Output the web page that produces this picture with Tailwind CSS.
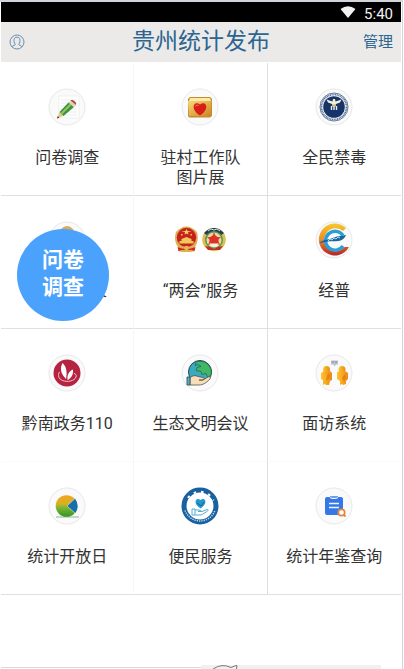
<!DOCTYPE html>
<html lang="zh-CN">
<head>
    <meta charset="UTF-8">
    <meta name="viewport" content="width=device-width, initial-scale=1">
    <title>贵州统计发布</title>
    <script src="https://cdn.jsdelivr.net/npm/@tailwindcss/browser@4"></script>
</head>
<body class="bg-white text-[#333333] font-[Roboto,'Noto_Sans_CJK_SC',sans-serif]">

<div class="relative flex flex-col min-h-screen border-t-2 border-t-gray-300 border-r border-r-gray-300 mr-px pl-px overflow-hidden">

    <!-- Status bar -->
    <div class="flex items-center justify-end gap-2 h-5 bg-black text-[#f2f2f2] text-[15px] pr-2 mr-px">
        <svg class="w-4 h-3" viewBox="0 0 16 12" fill="#f2f2f2" aria-hidden="true"><path d="M0.5 3Q8-2.5 15.5 3L8 12Z"/></svg>
        <span class="leading-5 mt-1">5:40</span>
    </div>

    <!-- Header -->
    <header class="grid grid-cols-3 items-center h-10 bg-[#ebeae9] text-[#2c6590] px-2 mr-px">
        <button type="button" aria-label="我的" class="justify-self-start">
            <svg class="size-4" viewBox="0 0 16 16" fill="none" stroke="#5c86a6" stroke-width="0.9">
                <circle cx="8" cy="8" r="7"/>
                <path d="M3 12.8c.5-1.600 3.400-1.400 3.400-2.500C5 9 4.800 7 5.100 5.200 5.500 2.500 10.500 2.500 10.900 5.200c.3 1.800.1 3.800-1.300 5.100 0 1.100 2.900.9 3.400 2.500"/>
            </svg>
        </button>
        <h1 class="justify-self-center whitespace-nowrap text-[23px] leading-10">贵州统计发布</h1>
        <button type="button" class="justify-self-end text-[15px]">管理</button>
    </header>

    <!-- Service grid -->
    <main class="grid grid-cols-3 auto-rows-[133px] pt-px mr-px text-base leading-5 text-center">

        <a href="#" class="flex flex-col items-center gap-[22px] pt-[25px] border-b border-b-[#e0e0e0] border-r border-r-[#f7f7f7]">
            <svg class="size-[38px]" viewBox="0 0 38 38" aria-hidden="true">
                <circle cx="19" cy="19" r="18" fill="#fafafa" stroke="#e8e8e8"/>
                <path d="M11 8h20v22H11z" fill="#fff" stroke="#e5e7e5" stroke-width=".6"/>
                <path d="M13 12h16M13 15h16M13 18h16M13 21h16M13 24h16M13 27h16" stroke="#e1e6e4" stroke-width=".7"/>
                <path d="M9 30.500l2.500-6.500 4 4z" fill="#e9c78a"/>
                <path d="M11.500 24L20.500 14.500l5.500 4.500-10.500 9z" fill="#3d9440"/>
                <path d="M12.700 25.100L21.900 15.700l1.600 1.300-9.500 9.500z" fill="#91c95a"/>
                <path d="M20.500 14.500l2-2 5.500 4.500-2 2z" fill="#e5cdb7"/>
                <path d="M22.500 12.500c2-1.500 6.500 1.500 5.500 4.500z" fill="#ad4b42"/>
                <path d="M9 30.500l.8-2.300 1.500 1.300z" fill="#222"/>
            </svg>
            <span>问卷调查</span>
        </a>

        <a href="#" class="flex flex-col items-center gap-[22px] pt-[25px] border-b border-b-[#e0e0e0] border-r border-r-[#dedede]">
            <svg class="size-[38px]" viewBox="0 0 38 38" aria-hidden="true">
                <defs><linearGradient id="folder" x2="1" y2="1"><stop stop-color="#f6da79"/><stop offset="1" stop-color="#cc8520"/></linearGradient></defs>
                <circle cx="19" cy="19" r="18" fill="#fafafa" stroke="#e8e8e8"/>
                <path d="M7 11l2-2h20l2 2v17l-2 1.500H8L7 28z" fill="#c78b2c"/>
                <path d="M7 13h23.500l-1 15H8z" fill="url(#folder)"/>
                <path d="M9 10h20l1 3H8z" fill="#fae9a8"/>
                <path d="M19 27.500C8.500 21 13 12 19 16.500 25 12 29.500 21 19 27.500z" fill="#d91e18"/>
                <path d="M14.500 18.500c.5-1.500 2-1.800 3-1" fill="none" stroke="#f6856b"/>
            </svg>
            <span>驻村工作队<br>图片展</span>
        </a>

        <a href="#" class="flex flex-col items-center gap-[22px] pt-[25px] border-b border-b-[#e0e0e0]">
            <svg class="size-[38px]" viewBox="0 0 38 38" aria-hidden="true">
                <circle cx="19" cy="19" r="18" fill="#fafafa" stroke="#e8e8e8"/>
                <circle cx="19" cy="19" r="14" fill="#fff" stroke="#2b4673" stroke-width=".7"/>
                <circle cx="19" cy="19" r="12.500" fill="none" stroke="#58729a" stroke-width="1.800" stroke-dasharray="1.100 .6"/>
                <circle cx="19" cy="19" r="10.800" fill="#163467"/>
                <path d="M11.500 11.500l6 2 .5-2.500h2l.5 2.500 6-2-1.500 3-4 1.500-.5 1.500h-3L17 16l-4-1.500z" fill="#f2f0dc"/>
                <path d="M17 16.500h4v2h-4z" fill="#c7bd69"/>
                <path d="M16.500 18v4M19 18v4M21.500 18v4" stroke="#e8edf5" stroke-width="1.400"/>
            </svg>
            <span>全民禁毒</span>
        </a>

        <a href="#" class="flex flex-col items-center gap-[22px] pt-[25px] border-b border-b-[#e0e0e0] border-r border-r-[#f7f7f7]">
            <svg class="size-[38px]" viewBox="0 0 38 38" aria-hidden="true">
                <circle cx="19" cy="19" r="18" fill="#fafafa" stroke="#e8e8e8"/>
                <ellipse cx="19" cy="14" rx="8" ry="9" fill="#d3ab62"/>
            </svg>
            <span>统计通讯录</span>
        </a>

        <a href="#" class="flex flex-col items-center gap-[22px] pt-[25px] border-b border-b-[#e0e0e0] border-r border-r-[#dedede]">
            <svg class="w-14 h-[38px]" viewBox="0 0 56 38" aria-hidden="true">
                <!-- National emblem -->
                <path d="M4 11Q14.500 0 25 11c2 7 0 13-3 16l1 3-4 1h-9l-4-1 1-3c-4-4-5-10-3-16z" fill="#ddb052"/>
                <circle cx="14.500" cy="16.500" r="9.700" fill="#c7201e"/>
                <path d="M14.500 8l1 2h2L16 11.500l.5 2-2-1-2 1 .5-2-1.500-1.500h2z" fill="#f2cf5b"/>
                <path d="M9 13h1.500v1.500H9zM18.500 13H20v1.500h-1.500zM10.500 10h1v1h-1zM17.500 10h1v1h-1z" fill="#f2cf5b"/>
                <path d="M9.500 18l5-2 5 2v2h2v2.500h-14V20h2z" fill="#efc85a"/>
                <path d="M5.500 26q9 4 18 0l-1 4-3-1h-10l-3 1z" fill="#cc2a22"/>
                <circle cx="14.500" cy="27" r="2.300" fill="#e6ba50"/>
                <!-- Conference emblem -->
                <circle cx="42" cy="18.500" r="11.800" fill="#e2bd50"/>
                <path d="M32 12Q42 2 52 12l-4 3q-6-4-12 0z" fill="#263c55"/>
                <path d="M36 10l3-2 3 1 3-1 3 2" stroke="#d8e1ea" fill="none"/>
                <circle cx="42" cy="19" r="9" fill="#4b9b58"/>
                <circle cx="42" cy="19" r="7.500" fill="#f2d8a0"/>
                <path d="M42 11l2 5h5l-3 3 2 5-6-2-6 2 2-5-3-3h5z" fill="#d84730"/>
                <circle cx="42" cy="19" r="4.500" fill="#dc3229"/>
                <path d="M33 25l5 1 4 2 4-2 5-1-3 4H36z" fill="#c62c24"/>
                <path d="M37.500 22.500h9l-2 3h-5z" fill="#fff4df"/>
            </svg>
            <span>“两会”服务</span>
        </a>

        <a href="#" class="flex flex-col items-center gap-[22px] pt-[25px] border-b border-b-[#e0e0e0]">
            <svg class="size-[38px]" viewBox="0 0 38 38" aria-hidden="true">
                <defs>
                    <linearGradient id="census" x2="0" y2="1"><stop stop-color="#f6c92c"/><stop offset=".5" stop-color="#ee8b2a"/><stop offset="1" stop-color="#b82123"/></linearGradient>
                </defs>
                <circle cx="19" cy="19" r="18" fill="#fafafa" stroke="#e8e8e8"/>
                <path d="M31 7A16 16 0 1 0 34 26l-4.500 0A11.500 11.500 0 1 1 28 10z" fill="url(#census)"/>
                <path d="M28 14.500A9.500 9.500 0 1 0 28 25" fill="none" stroke="#2b9fd5" stroke-width="3.400"/>
                <path d="M4 22.500C8 18 15 19 19 16.500c4-2 8-1.500 12-2.500-1 2.500-3 5.500-8 6-6 .5-9-.5-19 2.500z" fill="#16679e"/>
                <path d="M13 20l2-2 2 1 2-2 2 1 2-2 2 1" fill="none" stroke="#bde7f6" stroke-width=".9"/>
            </svg>
            <span>经普</span>
        </a>

        <a href="#" class="flex flex-col items-center gap-[22px] pt-[25px] border-b border-b-[#fafafa] border-r border-r-[#f7f7f7]">
            <svg class="size-[38px]" viewBox="0 0 38 38" aria-hidden="true">
                <circle cx="19" cy="19" r="18" fill="#fafafa" stroke="#e8e8e8"/>
                <circle cx="19" cy="19" r="13.500" fill="#b52340"/>
                <path d="M14.500 9c3.500 3 5 8 3.500 16C13 20 11.500 15 14.500 9z" fill="#fff"/>
                <path d="M25 15.500c.5 5-1.500 8.500-5.500 10.500-.5-5 1-8.500 5.500-10.500z" fill="#fff"/>
                <path d="M11.500 18c-2 3-1 7 3 8.500 5 2 12 .5 13.500-3.500.7-2-.5-3.500-2-3.500" fill="none" stroke="#f1c6cd" stroke-width="1"/>
            </svg>
            <span>黔南政务110</span>
        </a>

        <a href="#" class="flex flex-col items-center gap-[22px] pt-[25px] border-b border-b-[#fafafa] border-r border-r-[#dedede]">
            <svg class="size-[38px]" viewBox="0 0 38 38" stroke-linejoin="round" aria-hidden="true">
                <circle cx="19" cy="19" r="18" fill="#fafafa" stroke="#e8e8e8"/>
                <circle cx="19" cy="18" r="11.500" fill="#39a9bd" stroke="#23475b"/>
                <path d="M15 8c4-1.500 10-.5 13 3.500 2 3 3 6 2 9l-3 3-2-4-4 1-1-3-5-1 1-3 4-1-3-2-3 1z" fill="#3fb763" stroke="#24604a" stroke-width=".7"/>
                <path d="M9 23.500c3-2 5-2.500 8-1l5 1c2 .7 1 2.500-1 2.500h-3 4l5-3c2-1 3 .5 2 2-4 4-7 6-11 6H9z" fill="#f8deb6" stroke="#51514b" stroke-width=".8"/>
                <path d="M6 23h3v8H6z" fill="#57aebc" stroke="#23475b" stroke-width=".8"/>
            </svg>
            <span>生态文明会议</span>
        </a>

        <a href="#" class="flex flex-col items-center gap-[22px] pt-[25px] border-b border-b-[#fafafa]">
            <svg class="size-[38px]" viewBox="0 0 38 38" aria-hidden="true">
                <defs><linearGradient id="person"><stop stop-color="#ffc52b"/><stop offset="1" stop-color="#e98a17"/></linearGradient></defs>
                <circle cx="19" cy="19" r="18" fill="#fafafa" stroke="#e8e8e8"/>
                <path d="M16 6.500h7v4h-2l-1.500 2-1-2H16z" fill="#b9bfd0"/>
                <path d="M17.500 8h1M20.500 8h1" stroke="#525a78"/>
                <g fill="url(#person)">
                    <circle cx="11.500" cy="15.500" r="3.500"/>
                    <path d="M6 19l3-2h6l2 2v7l-2 1-1 4h-3l-1-1-2 1v-5l-2-1z"/>
                    <circle cx="27" cy="15.500" r="3.500"/>
                    <path d="M22 18l3-1h5l3 2v6l-2 2v3l-3 1-1-1-2 1v-4l-3-2z"/>
                </g>
                <path d="M13 19l2 2-1 4-3 2 1-4zM30 20l1 3-2 5-2-4z" fill="#ee731c" opacity=".8"/>
            </svg>
            <span>面访系统</span>
        </a>

        <a href="#" class="flex flex-col items-center gap-[22px] pt-[25px] border-b border-b-[#e0e0e0] border-r border-r-[#f7f7f7]">
            <svg class="size-[38px]" viewBox="0 0 38 38" aria-hidden="true">
                <defs>
                    <linearGradient id="pie" x2="0" y2="1"><stop stop-color="#f3a51d"/><stop offset=".4" stop-color="#d8b122"/><stop offset=".6" stop-color="#76b631"/><stop offset="1" stop-color="#37902c"/></linearGradient>
                </defs>
                <circle cx="19" cy="19" r="18" fill="#fafafa" stroke="#e8e8e8"/>
                <path d="M8 30h23" stroke="#afcbb3" stroke-width="1.500"/>
                <circle cx="18.500" cy="19" r="10.800" fill="url(#pie)"/>
                <path d="M19 19l8-7.500q5 7 .5 14.500z" fill="#176eaa"/>
                <path d="M27.500 11L19 19l8.500 7.500" fill="none" stroke="#f3f6e7" stroke-width=".5"/>
            </svg>
            <span>统计开放日</span>
        </a>

        <a href="#" class="flex flex-col items-center gap-[22px] pt-[25px] border-b border-b-[#e0e0e0] border-r border-r-[#dedede]">
            <svg class="size-[38px]" viewBox="0 0 38 38" aria-hidden="true">
                <circle cx="19" cy="19" r="16" fill="#fff" stroke="#1960a0" stroke-width="5"/>
                <path d="M5.500 13.500A14.800 14.800 0 0 1 32.500 13.500" fill="none" stroke="#fff" stroke-width="2" stroke-dasharray="2.500 5" stroke-dashoffset="-3"/>
                <path d="M4 23.500A16 16 0 0 0 34 23.500" fill="none" stroke="#b7d5ed" stroke-width="1.500" stroke-dasharray="1.300 1"/>
                <path d="M19.500 21.500c-8-5-5-12 0-8.500 5-3.500 8 3.500 0 8.500z" fill="#2099cc"/>
                <path d="M16 16l4 3 3-4" fill="none" stroke="#1761a1"/>
                <path d="M11 22h3v6h-3zM14 23h4l3 1.500h-4 4l5-2c2 0 1 1.500 0 2L20 28h-6" fill="none" stroke="#54adcd"/>
            </svg>
            <span>便民服务</span>
        </a>

        <a href="#" class="flex flex-col items-center gap-[22px] pt-[25px] border-b border-b-[#e0e0e0]">
            <svg class="size-[38px]" viewBox="0 0 38 38" aria-hidden="true">
                <circle cx="19" cy="19" r="18" fill="#fafafa" stroke="#e8e8e8"/>
                <path d="M12 10h2.500q1 2 3 2h3q2 0 3-2H26q2 0 2 2v14q0 2-2 2H12q-2 0-2-2V12q0-2 2-2z" fill="#3577e6"/>
                <path d="M15 9h8v1l-2 1h-4l-2-1z" fill="#6d9cec"/>
                <path d="M14 16.500h10M14 20.500h10" stroke="#eef5ff" stroke-width="1.500"/>
                <circle cx="26.500" cy="25.500" r="3.200" fill="#fff" stroke="#e5843e" stroke-width="1.700"/>
                <path d="M28.500 27.500l2 2" stroke="#e5843e" stroke-width="1.800"/>
            </svg>
            <span>统计年鉴查询</span>
        </a>
    </main>

    <!-- Tab bar edge -->
    <footer class="mt-auto grid grid-cols-2 items-end mr-px">
        <div class="border-t border-[#d9d9d9] h-0.5"></div>
        <div class="h-1 mr-5 bg-[#f0f0f0]">
            <svg class="ml-3 w-7 h-1" viewBox="0 0 28 4" fill="none" stroke="#777777" aria-hidden="true"><path d="M0 4Q9-2 18 2.500l5-2 1 .2-.5 3.300"/></svg>
        </div>
    </footer>

    <!-- Floating survey button -->
    <button type="button" class="absolute left-[17px] top-[227px] size-[92px] rounded-full bg-[#4ba2fc] text-white text-[21px] font-bold leading-[27px] pb-0.5">问卷<br>调查</button>
</div>

</body>
</html>
